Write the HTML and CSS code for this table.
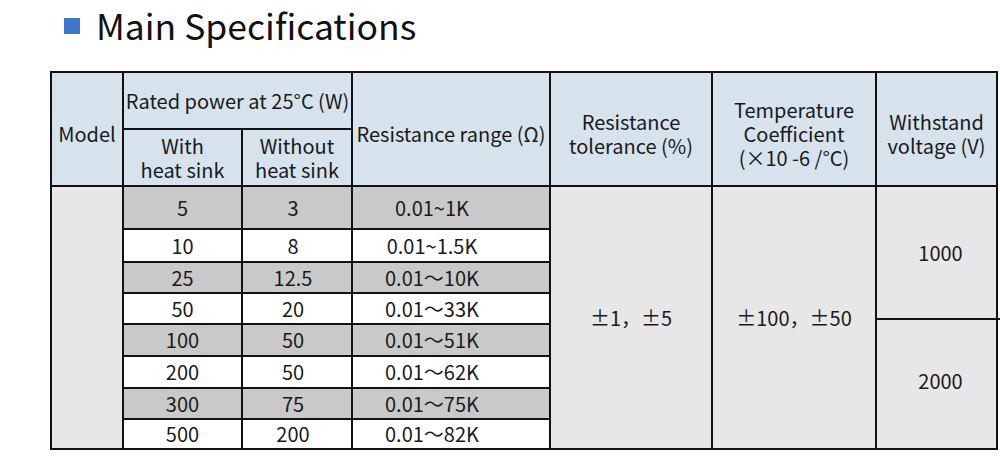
FILE: index.html
```html
<!DOCTYPE html>
<html>
<head>
<meta charset="utf-8">
<link rel="stylesheet" href="styles.css">
</head>
<body>
<div class="page">
  <h1 class="title"><span class="bullet"></span>Main Specifications</h1>
  <table class="spec">
    <colgroup>
      <col class="c-model"><col class="c-with"><col class="c-without"><col class="c-range"><col class="c-tol"><col class="c-temp"><col class="c-volt">
    </colgroup>
    <thead>
      <tr class="h1">
        <th rowspan="2" class="tall">Model</th>
        <th colspan="2">Rated power at 25°C (W)</th>
        <th rowspan="2" class="tall">Resistance range (Ω)</th>
        <th rowspan="2" class="tall">Resistance<br>tolerance (%)</th>
        <th rowspan="2" class="tall">Temperature<br>Coefficient<br>(×10 -6 /°C)</th>
        <th rowspan="2" class="tall">Withstand<br>voltage (V)</th>
      </tr>
      <tr class="h2">
        <th>With<br>heat sink</th>
        <th>Without<br>heat sink</th>
      </tr>
    </thead>
    <tbody>
      <tr class="dark r1">
        <td rowspan="8" class="light"></td>
        <td>5</td><td class="shift">3</td><td class="range">0.01~1K</td>
        <td rowspan="8" class="light">±1，±5</td>
        <td rowspan="8" class="light">±100，±50</td>
        <td rowspan="8" class="light volt">
          <div class="volt-col">
            <div class="volt-top">1000</div>
            <div class="volt-bot">2000</div>
          </div>
        </td>
      </tr>
      <tr class="r2"><td>10</td><td class="shift">8</td><td class="range">0.01~1.5K</td></tr>
      <tr class="dark r3"><td>25</td><td class="shift">12.5</td><td class="range">0.01～10K</td></tr>
      <tr class="r4"><td>50</td><td class="shift">20</td><td class="range">0.01～33K</td></tr>
      <tr class="dark r5"><td>100</td><td class="shift">50</td><td class="range">0.01～51K</td></tr>
      <tr class="r6"><td>200</td><td class="shift">50</td><td class="range">0.01～62K</td></tr>
      <tr class="dark r7"><td>300</td><td class="shift">75</td><td class="range">0.01～75K</td></tr>
      <tr class="r8"><td>500</td><td class="shift">200</td><td class="range">0.01～82K</td></tr>
    </tbody>
  </table>
</div>
</body>
</html>
```

FILE: styles.css
```css
html, body {
  margin: 0;
  padding: 0;
  background: #ffffff;
}
body {
  font-family: "Noto Sans CJK SC", "Noto Sans", sans-serif;
  color: #1a1a1a;
}
.page {
  width: 1000px;
  height: 470px;
  overflow: hidden;
}
.title {
  margin: 0;
  height: 50px;
  padding-left: 64px;
  display: flex;
  align-items: center;
  font-size: 35.5px;
  font-weight: 400;
  line-height: 1;
  color: #111;
}
.bullet {
  display: inline-block;
  width: 16px;
  height: 16px;
  background: #3b78c9;
  margin-right: 16px;
  margin-top: 2px;
}
.spec {
  margin-left: 50px;
  margin-top: 21px;
  border-collapse: collapse;
  table-layout: fixed;
  width: 946px;
  border: 2px solid #111;
}
.c-model { width: 72px; }
.c-with { width: 119px; }
.c-without { width: 110px; }
.c-range { width: 198px; }
.c-tol { width: 162px; }
.c-temp { width: 164px; }
.c-volt { width: 121px; }
th, td {
  border: 2px solid #111;
  padding: 0;
  text-align: center;
  vertical-align: middle;
  font-weight: 400;
  font-size: 20px;
  line-height: 24px;
  color: #1a1a1a;
}
th {
  background: #d6e3ed;
}
th.tall { padding-top: 9px; }
.h1 { height: 57px; }
.h2 { height: 57px; }
td { background: #ffffff; }
td.shift { padding-right: 8px; }
td.range { padding-right: 38px; }
tr.dark td { background: #c9c9c9; }
tr.dark td.light, td.light { background: #e7e7e7; }
.r1 { height: 43px; }
.r2 { height: 33px; }
.r3 { height: 31px; }
.r4 { height: 31px; }
.r5 { height: 32px; }
.r6 { height: 32px; }
.r7 { height: 31px; }
.r8 { height: 30px; }
td.volt {
  position: relative;
}
.volt-col {
  display: flex;
  flex-direction: column;
  height: 261px;
  padding-left: 8px;
}
.volt-top {
  height: 131px;
  display: flex;
  align-items: center;
  justify-content: center;
}
.volt-bot {
  flex: 1;
  display: flex;
  align-items: center;
  justify-content: center;
  padding-bottom: 6px;
  border-top: 2px solid #111;
  margin-left: -8px;
  padding-left: 8px;
  position: relative;
}
.volt-bot::after {
  content: "";
  position: absolute;
  top: -2px;
  right: -6px;
  width: 6px;
  height: 2px;
  background: #111;
}
```
